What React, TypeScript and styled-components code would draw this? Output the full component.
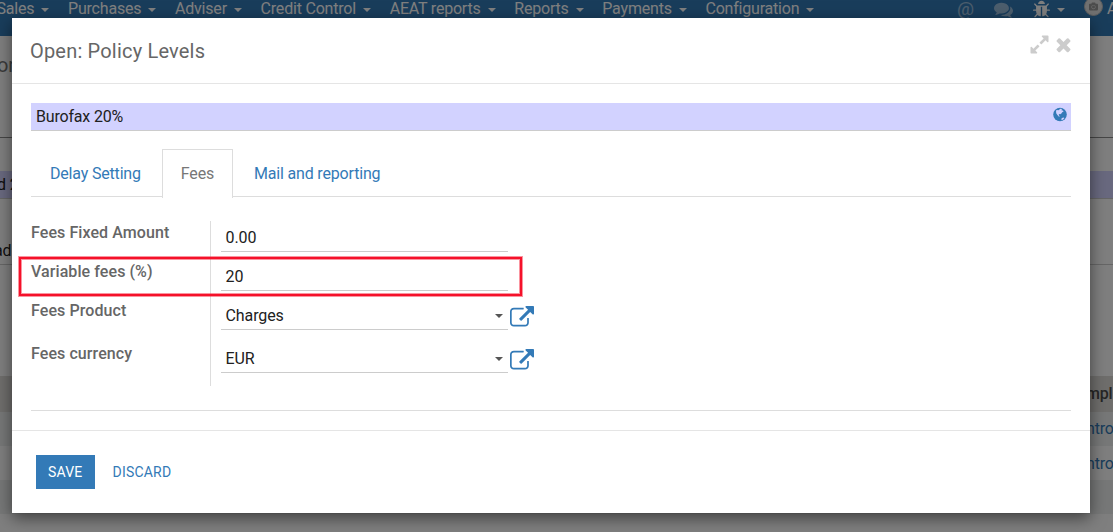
import React from "react";
import styled, { createGlobalStyle } from "styled-components";
import { FaCamera } from "react-icons/fa";

const GlobalStyle = createGlobalStyle`
  * { box-sizing: border-box; }
  html, body { margin: 0; padding: 0; }
  body {
    font-family: Roboto, "Liberation Sans", sans-serif;
    font-size: 16px;
    line-height: 20px;
    letter-spacing: -0.18px;
    color: #212121;
    overflow: hidden;
  }
`;

const Screen = styled.div`
  position: relative;
  width: 1113px;
  height: 532px;
  overflow: hidden;
  background: #fff;
`;

/* ---------- page behind the dialog ---------- */

const NavBar = styled.nav`
  display: flex;
  justify-content: space-between;
  height: 36px;
  background: #337ab7;
  color: #fff;
  overflow: hidden;
`;

const Menu = styled.div`
  display: flex;
  gap: 18.7px;
  height: 20px;
  margin: -1px 0 0 -3.5px;
  letter-spacing: -0.2px;
`;

const MenuItem = styled.span`
  display: flex;
  align-items: center;
  gap: 7px;
  white-space: nowrap;
`;

const Caret = styled.i<{ $color?: string; $top?: number }>`
  width: 8px;
  height: 4px;
  flex: none;
  border: 4px solid transparent;
  border-top-color: ${(p) => p.$color ?? "currentColor"};
  border-bottom: 0;
  margin-top: ${(p) => p.$top ?? 2}px;
`;

const Tray = styled.div`
  display: flex;
  align-items: flex-start;
  width: 156px;
  flex: none;
  white-space: nowrap;
`;

const TrayIcon = styled.span<{ $w: number; $top?: number; $gap?: number; $dim?: boolean }>`
  display: flex;
  align-items: center;
  gap: 6px;
  flex: none;
  width: ${(p) => p.$w}px;
  margin-top: ${(p) => p.$top ?? 0}px;
  opacity: ${(p) => (p.$dim ? 0.5 : 1)};
`;

const At = styled.span`
  font-size: 19px;
  line-height: 20px;
`;

const Avatar = styled.span`
  display: flex;
  align-items: center;
  justify-content: center;
  flex: none;
  width: 19px;
  height: 19px;
  margin: -3px 4px 0 0;
  border: 1px solid #bbb;
  border-radius: 50%;
  background: #e2e2e2;
  color: #999;
`;

const UserName = styled.span`
  margin-top: -1px;
`;

const Strip = styled.div<{ $h: number; $bg?: string; $line?: string; $pt?: number }>`
  display: flex;
  justify-content: space-between;
  height: ${(p) => p.$h}px;
  padding-top: ${(p) => p.$pt ?? 0}px;
  background: ${(p) => p.$bg ?? "transparent"};
  border-bottom: ${(p) => (p.$line ? `1px solid ${p.$line}` : "0")};
  white-space: nowrap;
  overflow: hidden;
`;

const Crumb = styled.span`
  margin-left: -3px;
  font-size: 20px;
  color: #777;
`;

const EdgeText = styled.span<{ $shift?: number }>`
  margin-left: ${(p) => p.$shift ?? 0}px;
`;

const ColumnText = styled.span<{ $link?: boolean }>`
  width: 27px;
  margin-left: auto;
  font-weight: ${(p) => (p.$link ? 400 : 500)};
  color: ${(p) => (p.$link ? "#337ab7" : "#4c4c4c")};
`;

/* ---------- dialog ---------- */

const Backdrop = styled.div`
  position: absolute;
  inset: 0;
  padding: 18px 23px 0 12px;
  background: rgba(0, 0, 0, 0.5);
`;

const Dialog = styled.section`
  display: flex;
  flex-direction: column;
  height: 495px;
  background: #fff;
  box-shadow: 0 5px 15px rgba(0, 0, 0, 0.5);
`;

const DialogHeader = styled.header`
  display: flex;
  justify-content: space-between;
  height: 66px;
  padding: 16px 16px 0 18px;
  border-bottom: 1px solid #e5e5e5;
`;

const Title = styled.h4`
  margin: 0;
  font-size: 20px;
  font-weight: 400;
  line-height: 34px;
  letter-spacing: 0.19px;
  color: #666;
`;

const HeaderActions = styled.div`
  display: flex;
  gap: 3px;
  color: #ccc;
`;

const DialogBody = styled.div`
  height: 346px;
  padding: 19px 19px 0;
`;

const NameField = styled.div`
  display: flex;
  justify-content: space-between;
  height: 28px;
  padding: 4px 4px 0 5px;
  background: #d2d2ff;
  border-bottom: 1px solid #ccc;
`;

const Tabs = styled.div`
  display: flex;
  height: 48px;
  margin-top: 18px;
  border-bottom: 1px solid #ddd;
`;

const Tab = styled.div<{ $active?: boolean }>`
  height: ${(p) => (p.$active ? 49 : 47)}px;
  margin-right: 2px;
  padding: 14px 18px 0;
  border: 1px solid ${(p) => (p.$active ? "#ddd" : "transparent")};
  border-bottom: 0;
  background: #fff;
  color: ${(p) => (p.$active ? "#777" : "#337ab7")};
  white-space: nowrap;
`;

const Form = styled.div`
  height: 214px;
  padding-top: 24px;
  border-bottom: 1px solid #ddd;
`;

const FormRow = styled.div<{ $h: number }>`
  position: relative;
  display: flex;
  height: ${(p) => p.$h}px;
`;

const Label = styled.label`
  width: 180px;
  padding-top: 2px;
  border-right: 1px solid #ddd;
  font-weight: 500;
  letter-spacing: 0.08px;
  color: #666;
`;

const Value = styled.div`
  display: flex;
  justify-content: space-between;
  align-items: center;
  width: 287px;
  height: 31px;
  margin-left: 10px;
  padding: 4px 5px 0 4.5px;
  border-bottom: 1px solid #ccc;
  letter-spacing: -0.1px;
`;

const OpenLink = styled.span`
  display: flex;
  margin: 7px 0 0 2px;
  height: 24px;
  color: #337ab7;
`;

const Highlight = styled.div`
  position: absolute;
  left: -12px;
  top: -3px;
  width: 503px;
  height: 39px;
  border: 2px solid #f5112a;
  box-shadow: 0 0 0 1px rgba(245, 17, 42, 0.45), inset 0 0 0 1px rgba(245, 17, 42, 0.45);
`;

const DialogFooter = styled.footer`
  display: flex;
  flex: 1;
  gap: 6px;
  padding: 24px 24px 0;
  border-top: 1px solid #e5e5e5;
`;

const Button = styled.button<{ $primary?: boolean }>`
  height: 34px;
  padding: 0 12px;
  border: 0;
  font: 400 14px/34px Roboto, "Liberation Sans", sans-serif;
  letter-spacing: 0.2px;
  background: ${(p) => (p.$primary ? "#337ab7" : "transparent")};
  color: ${(p) => (p.$primary ? "#fff" : "#337ab7")};
`;

const icons = {
  times:
    "M1490 1322q0 40-28 68l-136 136q-28 28-68 28t-68-28l-294-294-294 294q-28 28-68 28t-68-28l-136-136q-28-28-28-68t28-68l294-294-294-294q-28-28-28-68t28-68l136-136q28-28 68-28t68 28l294 294 294-294q28-28 68-28t68 28l136 136q28 28 28 68t-28 68l-294 294 294 294q28 28 28 68z",
  expand:
    "M883 1056q0 13-10 23l-332 332 144 144q19 19 19 45t-19 45-45 19h-448q-26 0-45-19t-19-45v-448q0-26 19-45t45-19 45 19l144 144 332-332q10-10 23-10t23 10l114 114q10 10 10 23zm781-864v448q0 26-19 45t-45 19-45-19l-144-144-332 332q-10 10-23 10t-23-10l-114-114q-10-10-10-23t10-23l332-332-144-144q-19-19-19-45t19-45 45-19h448q26 0 45 19t19 45z",
  external:
    "M1408 928v320q0 119-84.5 203.5t-203.5 84.5h-832q-119 0-203.5-84.5t-84.5-203.5v-832q0-119 84.5-203.5t203.5-84.5h704q14 0 23 9t9 23v64q0 14-9 23t-23 9h-704q-66 0-113 47t-47 113v832q0 66 47 113t113 47h832q66 0 113-47t47-113v-320q0-14 9-23t23-9h64q14 0 23 9t9 23zm384-864v512q0 26-19 45t-45 19-45-19l-176-176-652 652q-10 10-23 10t-23-10l-114-114q-10-10-10-23t10-23l652-652-176-176q-19-19-19-45t19-45 45-19h512q26 0 45 19t19 45z",
  comments:
    "M1408 768q0 139-94 257t-256.5 186.5-353.5 68.5q-86 0-176-16-124 88-278 128-36 9-86 16h-3q-11 0-20.5-8t-11.5-21q-1-3-1-6.5t.5-6.5 2-6l2.5-5 3.5-5.5 4-5 4.5-5 4-4.5q5-6 23-25t26-29.5 22.5-29 25-38.5 20.5-44q-124-72-195-177t-71-224q0-139 94-257t256.5-186.5 353.5-68.5 353.5 68.5 256.5 186.5 94 257zm384 256q0 120-71 224.5t-195 176.5q10 24 20.5 44t25 38.5 22.5 29 26 29.5 23 25q1 1 4 4.5t4.5 5 4 5 3.5 5.5l2.5 5 2 6 .5 6.5-1 6.5q-3 14-13 22t-22 7q-50-7-86-16-154-40-278-128-90 16-176 16-271 0-472-132 58 4 88 4 161 0 309-45t264-129q125-92 192-212t67-254q0-77-23-152 129 71 204 178t75 230z",
  bug: "M1696 960q0 26-19 45t-45 19h-224q0 171-67 290l208 209q19 19 19 45t-19 45q-18 19-45 19t-45-19l-198-197q-5 5-15 13t-42 28.5-65 36.5-82 29-97 13v-896h-128v896q-51 0-101.5-13.5t-87-33-66-39-43.5-32.5l-15-14-183 207q-20 21-48 21-24 0-43-16-19-18-20.5-44.5t15.5-46.5l202-227q-58-114-58-274h-224q-26 0-45-19t-19-45 19-45 45-19h224v-294l-173-173q-19-19-19-45t19-45 45-19 45 19l173 173h844l173-173q19-19 45-19t45 19 19 45-19 45l-173 173v294h224q26 0 45 19t19 45zm-480-576h-640q0-133 93.5-226.5t226.5-93.5 226.5 93.5 93.5 226.5z",
};

const Icon = ({ name, size }: { name: keyof typeof icons; size: number }) => (
  <svg width={size} height={size} viewBox="0 0 1792 1792" fill="currentColor" overflow="visible">
    <path d={icons[name]} />
  </svg>
);

const Globe = () => (
  <svg width="14" height="15" viewBox="0 -.5 14 15">
    <circle cx="7" cy="7" r="6.8" fill="#337ab7" />
    <path
      fill="#d2d2ff"
      d="M3 3 4 2.4 5.6 2.8 6.4 2 7.4 1.2 9 1.6 8.4 2.8 9.8 3 10.6 4 9.2 4.8 8.4 6 7.2 6.8 6.2 6.6 5.6 7.4 6.8 8.8 6 9.2 4.4 7.6 3.2 5.8ZM8.6 10.8 10.2 9.9 11.4 10.6 10.2 12 8.4 12.8Z"
    />
  </svg>
);

const menu = [
  "Sales",
  "Purchases",
  "Adviser",
  "Credit Control",
  "AEAT reports",
  "Reports",
  "Payments",
  "Configuration",
];

const fields = [
  { label: "Fees Fixed Amount", value: "0.00", h: 39 },
  { label: "Variable fees (%)", value: "20", h: 39, highlighted: true },
  { label: "Fees Product", value: "Charges", h: 43, relation: true },
  { label: "Fees currency", value: "EUR", h: 44, relation: true },
];

export default function App() {
  return (
    <Screen>
      <GlobalStyle />
      <NavBar>
        <Menu>
          {menu.map((m) => (
            <MenuItem key={m}>
              {m}
              <Caret />
            </MenuItem>
          ))}
        </Menu>
        <Tray>
          <TrayIcon $w={37} $top={-1} $dim>
            <At>@</At>
          </TrayIcon>
          <TrayIcon $w={38} $dim>
            <Icon name="comments" size={19} />
          </TrayIcon>
          <TrayIcon $w={52}>
            <Icon name="bug" size={19} />
            <Caret $top={1} />
          </TrayIcon>
          <Avatar>
            <FaCamera size={9} />
          </Avatar>
          <UserName>Admin</UserName>
        </Tray>
      </NavBar>
      <Strip $h={102} $pt={19} $line="#8c8c8c">
        <Crumb>or</Crumb>
      </Strip>
      <Strip $h={33} />
      <Strip $h={28} $bg="#d2d2ff" $line="#ccc" $pt={4}>
        <EdgeText $shift={-3}>d 2</EdgeText>
      </Strip>
      <Strip $h={66} $line="#ccc" $pt={42}>
        <EdgeText $shift={-6}>ad</EdgeText>
      </Strip>
      <Strip $h={111} />
      <Strip $h={36} $bg="#dfddd9" $pt={8}>
        <ColumnText>mpl</ColumnText>
      </Strip>
      <Strip $h={34} $bg="#eef1f0" $pt={7}>
        <ColumnText $link>ntro</ColumnText>
      </Strip>
      <Strip $h={34} $pt={8}>
        <ColumnText $link>ntro</ColumnText>
      </Strip>
      <Strip $h={34} $bg="#eef1f0" />

      <Backdrop>
        <Dialog>
          <DialogHeader>
            <Title>Open: Policy Levels</Title>
            <HeaderActions>
              <Icon name="expand" size={21} />
              <Icon name="times" size={21} />
            </HeaderActions>
          </DialogHeader>
          <DialogBody>
            <NameField>
              <span>Burofax 20%</span>
              <Globe />
            </NameField>
            <Tabs>
              <Tab>Delay Setting</Tab>
              <Tab $active>Fees</Tab>
              <Tab>Mail and reporting</Tab>
            </Tabs>
            <Form>
              {fields.map((f) => (
                <FormRow key={f.label} $h={f.h}>
                  <Label>{f.label}</Label>
                  <Value>
                    {f.value}
                    {f.relation && <Caret $color="#555" $top={0} />}
                  </Value>
                  {f.relation && (
                    <OpenLink>
                      <Icon name="external" size={24} />
                    </OpenLink>
                  )}
                  {f.highlighted && <Highlight />}
                </FormRow>
              ))}
            </Form>
          </DialogBody>
          <DialogFooter>
            <Button $primary>SAVE</Button>
            <Button>DISCARD</Button>
          </DialogFooter>
        </Dialog>
      </Backdrop>
    </Screen>
  );
}
